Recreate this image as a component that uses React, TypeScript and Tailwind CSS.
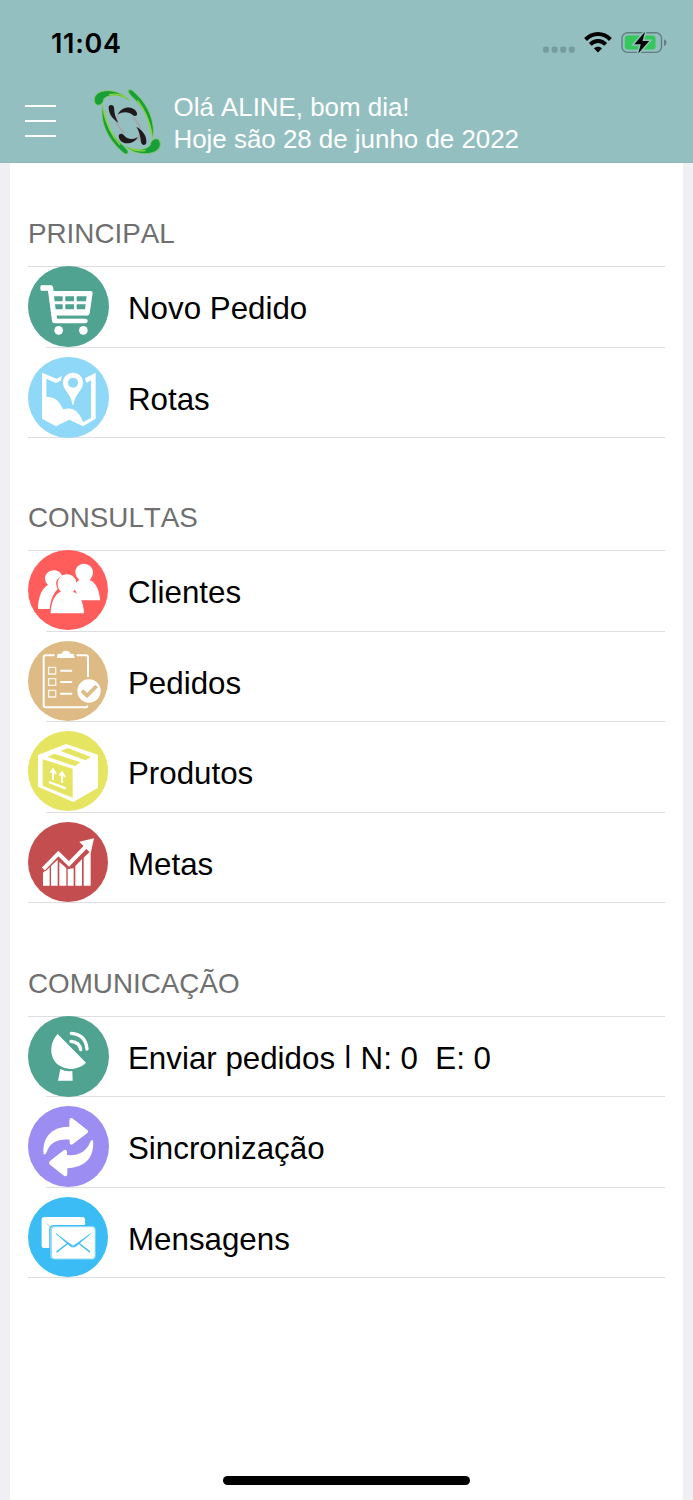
import type { ReactNode } from "react";

type MenuItem = {
  id: string;
  label: ReactNode;
  icon: ReactNode;
};

type MenuSection = {
  title: string;
  className: string;
  items: MenuItem[];
};

type BadgeProps = {
  viewBox: string;
  className: string;
  children: ReactNode;
};

function Badge({ viewBox, className, children }: BadgeProps) {
  return (
    <svg viewBox={viewBox} className={`shrink-0 rounded-full ${className}`} fill="none">
      {children}
    </svg>
  );
}

const CartIcon = () => (
  <Badge viewBox="24 18 243 243" className="size-[81px] bg-[#50a391]">
    <path d="M68 84H91L105 183H196" stroke="#fff" strokeWidth="14" strokeLinecap="round" strokeLinejoin="round" />
    <path d="M62 76h31q5 0 6 5l2 12h111q6 0 6 7l-9 60q-1 7-8 7h-92v9h86q6 0 6 6t-6 7H102q-6 0-6-6L84 92H62z" fill="#fff" />
    <path d="M102 109h26v15h-24zM136 109h26v15h-26zM170 109h30l-2 15h-28zM105 133h23v15h-21zM136 133h26v15h-26zM170 133h27l-2 15h-25z" fill="#50a391" />
    <path d="M111 167h90v8h-86q-4 0-4-4z" fill="#50a391" />
    <circle cx="116" cy="211" r="13" fill="#fff" />
    <circle cx="190" cy="211" r="13" fill="#fff" />
  </Badge>
);

const MapIcon = () => (
  <Badge viewBox="24 21 243 243" className="size-[81px] bg-[#8fd8f7]">
    <path d="M66 68l44 18 16-8-4 14-14 7-29-13v54c20 0 34 9 42 23q5 10 9 15c16-5 32-3 43 10q12 13 16 28l24-12V91l-14 7-4-13 32-17v138l-38 23-41-20-40 20-42-23z" fill="#fff" />
    <path d="M159 68c-17 0-30 13-30 30 0 23 23 31 28 64q2 6 4 0c5-33 28-41 28-64 0-17-13-30-30-30z" fill="#fff" />
    <circle cx="159" cy="98" r="15" fill="#8fd8f7" />
  </Badge>
);

const ClientsIcon = () => (
  <Badge viewBox="24 17 240 240" className="size-20 bg-[#ff5c5c]">
    <path d="M178 106q-12-9-12-22c0-15 11-26 26-26s27 11 27 26q0 13-10 23c18 7 30 30 31 61h-65q-5-34-23-45 15-4 26-17z" fill="#fff" />
    <path d="M84 122q-9-8-9-19c0-14 11-25 27-25 12 0 21 7 25 17-16 5-21 17-17 31l3 9c-13 12-21 31-24 59H54c0-37 13-64 30-72z" fill="#fff" />
    <path d="M123 142q-10-9-10-24c0-16 12-28 28-28s28 12 28 28q0 15-10 24c19 6 32 30 33 65H92c1-35 13-59 31-65z" fill="#fff" />
  </Badge>
);

const OrdersIcon = () => (
  <Badge viewBox="24 288 240 240" className="size-20 bg-[#debb85]">
    <g stroke="#fff" strokeWidth="6" strokeLinecap="round" strokeLinejoin="round">
      <path d="M101 331H77q-6 0-6 6v144q0 6 6 6h118q7 0 7-3M172 331h25q7 0 7 6v57" />
      <path d="M123 377h31M123 411h31M123 446h31" />
    </g>
    <path d="M86 367h21v20H86zM86 401h21v20H86zM86 436h21v20H86z" stroke="#fff" strokeWidth="4" opacity="0.85" />
    <path d="M111 339v-6q0-7 8-7h6q2-9 13-9t13 9h5q7 0 7 7v6z" fill="#fff" />
    <circle cx="207" cy="438" r="35" fill="#fff" />
    <path d="M186 437l15 15 29-29" stroke="#debb85" strokeWidth="11" />
  </Badge>
);

const ProductsIcon = () => (
  <Badge viewBox="24 18 240 240" className="size-20 bg-[#e6e562]">
    <path d="M54 90l84-33 96 32v99l-74 43-106-46z" fill="#fff" />
    <path d="M68 103l90 28v87l-90-36z" fill="#e6e562" />
    <path d="M82 95l21-9 78 26-16 12zM122 78l22-9 69 27-17 10z" fill="#e6e562" />
    <path d="M99 165v-27M126 173v-27M91 143l8-10 9 14M118 151l8-9 9 14" stroke="#fff" strokeWidth="6" />
    <path d="M87 171l50 19" stroke="#fff" strokeWidth="7" />
  </Badge>
);

const GoalsIcon = () => (
  <Badge viewBox="24 291 240 240" className="size-20 bg-[#c44e4f]">
    <path d="M69 443l20-18v57H69zM93 422l20-18v78H93zM118 411l21 18v53h-21zM143 432l18-2v52h-18zM166 423l20-21v80h-20zM191 398l21-20v104h-21z" fill="#fff" />
    <path d="M70 432l45-45 32 31 58-60" stroke="#c44e4f" strokeWidth="20" />
    <path d="M70 432l45-46 32 31 58-60" stroke="#fff" strokeWidth="12" />
    <path d="M178 350l44-10-10 45z" fill="#fff" />
  </Badge>
);

const DishIcon = () => (
  <Badge viewBox="24 18 243 243" className="size-[81px] bg-[#50a391]">
    <path d="M113 72l85 86c-21 20-55 26-81 8-29-20-31-65-4-94z" fill="#fff" />
    <path d="M121 177q17 9 36 6l1 29h-44z" fill="#fff" />
    <path d="M153 94q26 2 29 25M154 70q43 3 47 47" stroke="#fff" strokeWidth="10" strokeLinecap="round" />
  </Badge>
);

const SyncIcon = () => (
  <Badge viewBox="24 18 243 243" className="size-[81px] bg-[#9b8df2]">
    <path d="M148 61q1-9 9-6l44 34q7 5 0 11l-43 33q-8 4-9-4v-10c-35-3-58 7-70 39q-2 6-8 5c-5-49 23-84 77-83z" fill="#fff" />
    <path d="M142 222q-1 9-9 6l-43-34q-6-5 0-11l41-32q9-5 10 4v10c34 3 58-10 70-40q2-5 8-4c5 53-24 81-77 84z" fill="#fff" />
  </Badge>
);

const MessagesIcon = () => (
  <Badge viewBox="24 291 241 241" className="size-[80px] bg-[#3bbcf5]">
    <rect x="65" y="351" width="131" height="94" rx="9" fill="#fff" />
    <path d="M79 370l21 18M196 374l-10 8" stroke="#3bbcf5" strokeWidth="3" opacity="0.5" />
    <rect x="88" y="375" width="142" height="106" rx="13" fill="#3bbcf5" />
    <rect x="91" y="378" width="137" height="101" rx="12" fill="#fff" opacity="0.45" />
    <rect x="96" y="382" width="129" height="94" rx="9" fill="#fff" />
    <path d="M109 402l51 37 52-37-41 35q-11 10-22 0z" fill="#3bbcf5" stroke="#3bbcf5" strokeWidth="2" />
    <path d="M110 457l33-26M211 457l-33-26" stroke="#3bbcf5" strokeWidth="4" />
  </Badge>
);

const SECTIONS: MenuSection[] = [
  {
    title: "Principal",
    className: "h-[284.4px]",
    items: [
      { id: "novo-pedido", label: "Novo Pedido", icon: <CartIcon /> },
      { id: "rotas", label: "Rotas", icon: <MapIcon /> },
    ],
  },
  {
    title: "Consultas",
    className: "h-[465.6px]",
    items: [
      { id: "clientes", label: "Clientes", icon: <ClientsIcon /> },
      { id: "pedidos", label: "Pedidos", icon: <OrdersIcon /> },
      { id: "produtos", label: "Produtos", icon: <ProductsIcon /> },
      { id: "metas", label: "Metas", icon: <GoalsIcon /> },
    ],
  },
  {
    title: "Comunicação",
    className: "",
    items: [
      {
        id: "enviar",
        label: (
          <>
            Enviar pedidos <span className="inline-block origin-[50%_36%] scale-y-75">|</span>
            {" N: 0  E: 0"}
          </>
        ),
        icon: <DishIcon />,
      },
      { id: "sincronizacao", label: "Sincronização", icon: <SyncIcon /> },
      { id: "mensagens", label: "Mensagens", icon: <MessagesIcon /> },
    ],
  },
];

function Logo() {
  return (
    <svg viewBox="40 24 204 204" className="h-[68px] w-[68px]" fill="none" strokeLinecap="round">
      <g fill="#17a03a" stroke="#86cc5f" strokeWidth="2.5">
        <path d="M46 70c-9-20 8-39 40-38 26 1 48 12 63 30-30-21-62-20-77-5 0 15-17 26-26 13z" />
        <path d="M69 74c2 47 24 90 63 124 8 8 17 16 12 22-5 5-13-1-19-7C87 178 59 130 69 74z" />
        <path d="M145 34c2-7 10-5 15-1 44 37 69 92 59 144-4-53-25-92-62-127q-9-8-12-16z" />
        <path d="M240 183c8 20-9 38-44 38-24 0-44-8-57-22 31 15 60 12 73-4 0-17 21-26 28-12z" />
      </g>
      <path d="M74 92c6 42 22 76 46 101M214 160c-5-41-19-72-40-98M90 44c18-4 34 0 48 8M196 212c-18 2-32-1-44-6" stroke="#8fd23c" strokeWidth="4" />
      <g stroke="#aaa3a6" strokeWidth="5">
        <path d="M108 124q9 18 25 34M117 102q-8 9-6 24M182 144q-6-17-22-32M173 180q6-5 5-16" />
      </g>
      <g fill="#211a1d">
        <path d="M87 82c0-9 14-9 16 0 1 18 4 32 13 46-20-12-29-28-29-46z" />
        <path d="M115 103c9-22 44-29 56-6 5 10-5 15-12 8-11-10-29-11-44-2z" />
        <path d="M117 168c1-9 11-9 17-1 10 11 27 13 41 4-12 22-43 25-54 9q-4-6-4-12z" />
        <path d="M200 189c-3 9-14 7-16-2-2-18-5-33-14-47 21 12 32 29 30 49z" />
      </g>
    </svg>
  );
}

function StatusIcons() {
  return (
    <svg viewBox="540 28 128 30" className="h-[30px] w-32" fill="none">
      <g fill="#779c9d">
        <rect x="543" y="46.5" width="6" height="6.2" rx="2" />
        <rect x="551.6" y="46.5" width="6" height="6.2" rx="2" />
        <rect x="560.2" y="46.5" width="6" height="6.2" rx="2" />
        <rect x="568.8" y="46.5" width="6" height="6.2" rx="2" />
      </g>
      <path d="M585.6 39.5c7-7.3 17.8-7.3 24.8 0M590.3 44.3c4.4-4.4 11-4.4 15.4 0" stroke="#000" strokeWidth="4" />
      <path d="M598 52.5l-4.1-4.2c2.3-2.1 5.9-2.1 8.2 0z" fill="#000" />
      <rect x="622" y="32.8" width="39.5" height="19.6" rx="5.5" stroke="#60807f" strokeWidth="1.4" />
      <rect x="624.8" y="35.6" width="30.7" height="14" rx="3" fill="#34c759" />
      <path d="M664 39.2q2.5.9 2.5 3.4t-2.5 3.4z" fill="#60807f" />
      <path d="M645 31.8l-10.7 12.4h6.5l-2.6 9.4 11-12.7h-6.7z" fill="#000" stroke="#94bfc0" strokeWidth="3" paintOrder="stroke" />
    </svg>
  );
}

function Section({ title, className, items }: MenuSection) {
  return (
    <section className={className}>
      <h2 className="h-[103px] pt-[55px] text-[27.8px] leading-8 text-[#6f6f70] uppercase">{title}</h2>
      <ul className="border-t border-[#dedee0]">
        {items.map((item, index) => (
          <li
            key={item.id}
            className={`relative flex gap-[19px] ${index === 0 ? "h-[80.5px]" : "h-[90.5px] pt-[10px]"}`}
          >
            <span
              className={`absolute right-0 bottom-0 h-px bg-[#dedee0] ${index === items.length - 1 ? "left-0" : "left-[18px]"}`}
            />
            <span className="relative -mt-px flex w-[81px] shrink-0">{item.icon}</span>
            <span className="h-20 whitespace-pre text-[31.3px] leading-[83px] text-black">{item.label}</span>
          </li>
        ))}
      </ul>
    </section>
  );
}

export default function App() {
  return (
    <div className="flex h-[1500px] w-[693px] flex-col overflow-hidden bg-[#efeff4] font-['Liberation_Sans',Arial,sans-serif] [font-kerning:none]">
      <header className="h-[163px] shrink-0 border-b border-[#8fb8b9] bg-[#94bfc0]">
        <div className="flex h-[86px] items-center justify-between pr-[25px] pl-[51px]">
          <time className="font-['Inter',sans-serif] text-[27px] leading-none font-semibold tracking-[0.7px] text-black">
            11:04
          </time>
          <StatusIcons />
        </div>
        <div className="flex items-start pl-[25px]">
          <button type="button" aria-label="Menu" className="mt-[19px] flex w-[31px] flex-col gap-[13px]">
            <span className="h-[2px] w-full bg-white" />
            <span className="h-[2px] w-full bg-white" />
            <span className="h-[2px] w-full bg-white" />
          </button>
          <div className="mt-[2px] ml-[37px]">
            <Logo />
          </div>
          <div className="mt-[6px] ml-[12.5px] text-[25.9px] leading-[31.5px] whitespace-nowrap text-white">
            <p>Olá ALINE, bom dia!</p>
            <p>Hoje são 28 de junho de 2022</p>
          </div>
        </div>
      </header>

      <main className="relative mr-[10px] ml-[9.5px] flex-1 bg-white pr-[18px] pl-[18.5px]">
        {SECTIONS.map((section) => (
          <Section key={section.title} {...section} />
        ))}
        <div className="absolute bottom-[15px] left-[213.5px] h-[9px] w-[247px] rounded-full bg-black" />
      </main>
    </div>
  );
}
